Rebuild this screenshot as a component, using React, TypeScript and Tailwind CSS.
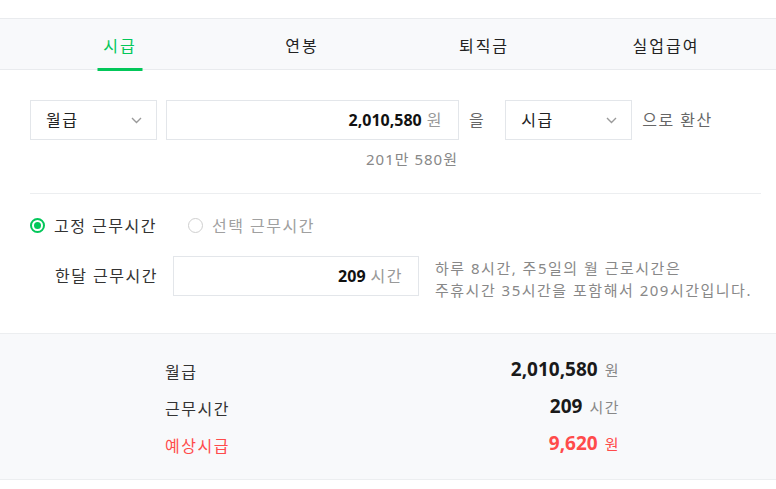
// Salary converter — 시급 tab
import { useState } from 'react';

const FONT = '"Noto Sans", "Noto Sans CJK KR", sans-serif';

const TABS = ['시급', '연봉', '퇴직금', '실업급여'];

function Chevron() {
  return (
    <svg width="11" height="7" viewBox="0 0 11 7" fill="none" className="shrink-0">
      <path d="M1 1l4.5 4.5L10 1" stroke="#9a9a9a" strokeWidth="1.4" />
    </svg>
  );
}

function Select({ value }: { value: string }) {
  return (
    <div className="flex h-10 w-[127px] shrink-0 items-center justify-between border border-[#e3e6ea] bg-white pl-[15px] pr-[14px] text-[16px] text-[#222]">
      <span>{value}</span>
      <Chevron />
    </div>
  );
}

function Radio({ checked, label }: { checked: boolean; label: string }) {
  return (
    <label className="flex items-center gap-[9px]">
      {checked ? (
        <span className="flex h-[15px] w-[15px] items-center justify-center rounded-full border-2 border-[#03c75a]">
          <span className="h-[7px] w-[7px] rounded-full bg-[#03c75a]" />
        </span>
      ) : (
        <span className="h-[15px] w-[15px] rounded-full border border-[#cfcfcf] bg-white" />
      )}
      <span className={checked ? 'text-[#333]' : 'text-[#a0a0a0]'}>{label}</span>
    </label>
  );
}

export default function App() {
  const [tab, setTab] = useState(0);

  const results = [
    { label: '월급', value: '2,010,580', unit: '원', red: false },
    { label: '근무시간', value: '209', unit: '시간', red: false },
    { label: '예상시급', value: '9,620', unit: '원', red: true },
  ];

  return (
    <div className="min-h-screen bg-white pt-[18px] tracking-[1.5px]" style={{ fontFamily: FONT }}>
      {/* Tabs */}
      <div className="flex h-[52px] border-y border-[#e9ebee] bg-[#f8f9fb] pl-[29px] pr-[19px]">
        {TABS.map((t, i) => (
          <button
            key={t}
            type="button"
            onClick={() => setTab(i)}
            className="relative flex flex-1 items-center justify-center pt-[3px] text-[16px] tracking-[2px]"
          >
            <span className={i === tab ? 'text-[#03c75a]' : 'text-[#222]'}>{t}</span>
            {i === tab && (
              <span className="absolute bottom-[-2px] left-1/2 h-[3px] w-[45px] -translate-x-1/2 bg-[#03c75a]" />
            )}
          </button>
        ))}
      </div>

      <div className="pl-[30px] pr-[15px]">
        {/* Conversion row */}
        <div className="mt-[30px] flex items-center">
          <Select value="월급" />
          <div className="ml-[9px] flex h-10 w-[293px] items-center justify-end border border-[#e3e6ea] pr-[15px] text-[16px]">
            <span className="font-bold tracking-normal text-[#111]">2,010,580</span>
            <span className="ml-[5px] text-[#999]">원</span>
          </div>
          <span className="ml-[10px] text-[16px] text-[#666]">을</span>
          <div className="ml-[20px]">
            <Select value="시급" />
          </div>
          <span className="ml-[10px] text-[16px] text-[#666]">으로 환산</span>
        </div>
        <div className="flex w-[428px] justify-end pt-[8px] text-[15px] tracking-[1px] text-[#888]">201만 580원</div>

        <div className="mt-[22px] border-t border-[#eceef0]" />

        {/* Working hours */}
        <div className="mt-[20px] flex items-center gap-[31px] text-[16px]">
          <Radio checked label="고정 근무시간" />
          <Radio checked={false} label="선택 근무시간" />
        </div>

        <div className="mt-[18px] flex items-start">
          <div className="flex h-10 w-[143px] items-center justify-end pr-[15px] text-[16px] text-[#333]">
            한달 근무시간
          </div>
          <div className="flex h-10 w-[246px] items-center justify-end border border-[#e3e6ea] pr-[15px] text-[16px]">
            <span className="font-bold tracking-normal text-[#111]">209</span>
            <span className="ml-[5px] text-[#999]">시간</span>
          </div>
          <p className="ml-[16px] mt-[1px] text-[15px] leading-[22px] text-[#888]">
            하루 8시간, 주5일의 월 근로시간은
            <br />
            주휴시간 35시간을 포함해서 209시간입니다.
          </p>
        </div>
      </div>

      {/* Result */}
      <div className="mt-[32px] border-y border-[#eceef0] bg-[#f8f9fb] pb-[17px] pt-[17px]">
        <div className="ml-[165px] w-[455px]">
          {results.map((r) => (
            <div key={r.label} className="flex h-[37px] items-center justify-between">
              <span className={`pt-[6px] text-[16px] ${r.red ? 'text-[#ff4b4b]' : 'text-[#333]'}`}>{r.label}</span>
              <span className="flex items-baseline">
                <span className={`text-[19px] font-bold tracking-normal ${r.red ? 'text-[#ff4b4b]' : 'text-[#1a1a1a]'}`}>{r.value}</span>
                <span className={`ml-[7px] text-[15px] ${r.red ? 'text-[#ff4b4b]' : 'text-[#888]'}`}>{r.unit}</span>
              </span>
            </div>
          ))}
        </div>
      </div>
    </div>
  );
}
